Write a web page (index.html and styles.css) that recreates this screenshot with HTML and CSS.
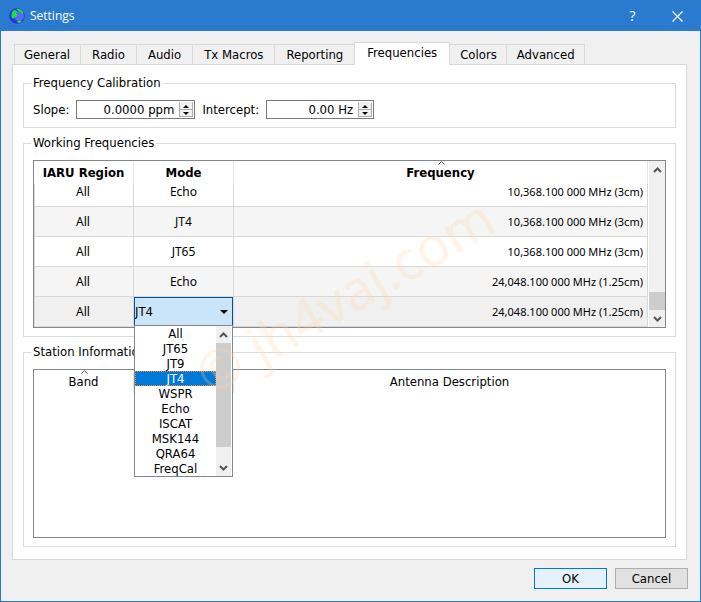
FILE: index.html
```html
<!DOCTYPE html>
<html lang="en">
<head>
    <meta charset="utf-8">
    <title>Settings</title>
    <link rel="stylesheet" href="styles.css">
</head>
<body>
<div class="window">
    <header class="titlebar">
        <svg class="globe" width="16" height="16" viewBox="0 0 16 16">
            <circle cx="8" cy="8" r="7.8" fill="#2336e6"/>
            <circle cx="10" cy="8" r="5" fill="#5c68f0"/>
            <path d="M3.5 3.5 5 2l2.500.5.5 2-1 1 1.500 1-1 2-2 1-1.500 1.500-1.500-2V6z" fill="#19e43c"/>
            <path d="M7 1l3-.3 3 1.800 1.500 2-1 1.500-1.500-1.500-1.500-1L9 2.500z" fill="#19e43c"/>
            <path d="M8 13l3-.6 2 .3-1.500 1.800-2.500.6z" fill="#19e43c"/>
        </svg>
        <h1>Settings</h1>
        <button class="win_btn" type="button" aria-label="Help">?</button>
        <button class="win_btn" type="button" aria-label="Close">
            <svg width="11" height="11" viewBox="0 0 11 11"><path d="M.5.5l10 10M10.500.5l-10 10" stroke="#fff" stroke-width="1.200" fill="none"/></svg>
        </button>
    </header>

    <main>
        <nav class="tabs" role="tablist">
            <button type="button" role="tab">General</button>
            <button type="button" role="tab">Radio</button>
            <button type="button" role="tab">Audio</button>
            <button type="button" role="tab">Tx Macros</button>
            <button type="button" role="tab">Reporting</button>
            <button type="button" role="tab" class="active" aria-selected="true">Frequencies</button>
            <button type="button" role="tab">Colors</button>
            <button type="button" role="tab">Advanced</button>
        </nav>

        <div class="pane">
            <fieldset>
                <legend>Frequency Calibration</legend>
                <div class="calibration">
                    <label for="slope">Slope:</label>
                    <div class="spin spin_slope">
                        <input type="text" id="slope" value="0.0000 ppm">
                        <div class="spin_btns">
                            <button type="button" aria-label="Increase slope"><svg width="6" height="3" viewBox="0 0 6 3"><path d="M0 3l3-3 3 3z"/></svg></button>
                            <button type="button" aria-label="Decrease slope"><svg width="6" height="3" viewBox="0 0 6 3"><path d="M0 0l3 3 3-3z"/></svg></button>
                        </div>
                    </div>
                    <label for="intercept">Intercept:</label>
                    <div class="spin spin_intercept">
                        <input type="text" id="intercept" value="0.00 Hz">
                        <div class="spin_btns">
                            <button type="button" aria-label="Increase intercept"><svg width="6" height="3" viewBox="0 0 6 3"><path d="M0 3l3-3 3 3z"/></svg></button>
                            <button type="button" aria-label="Decrease intercept"><svg width="6" height="3" viewBox="0 0 6 3"><path d="M0 0l3 3 3-3z"/></svg></button>
                        </div>
                    </div>
                </div>
            </fieldset>

            <fieldset>
                <legend>Working Frequencies</legend>
                <div class="view">
                    <table class="grid">
                        <thead>
                            <tr>
                                <th class="col_s">IARU Region</th>
                                <th class="col_s">Mode</th>
                                <th>Frequency<svg class="sort" width="7" height="4" viewBox="0 0 7 4"><path d="M.5 3.500l3-3 3 3" stroke="#555" fill="none"/></svg></th>
                            </tr>
                        </thead>
                        <tbody>
                            <tr class="clipped"><td>All</td><td>Echo</td><td>10,368.100 000 MHz (3cm)</td></tr>
                            <tr class="alt"><td>All</td><td>JT4</td><td>10,368.100 000 MHz (3cm)</td></tr>
                            <tr><td>All</td><td>JT65</td><td>10,368.100 000 MHz (3cm)</td></tr>
                            <tr class="alt"><td>All</td><td>Echo</td><td>24,048.100 000 MHz (1.25cm)</td></tr>
                            <tr class="current">
                                <td>All</td>
                                <td class="edit">
                                    <select class="mode" aria-label="Mode">
                                        <option>JT4</option>
                                    </select>
                                    <svg class="drop" width="8" height="4" viewBox="0 0 8 4"><path d="M0 0h8l-4 4z"/></svg>
                                    <div class="popup">
                                        <ul role="listbox" aria-label="Modes">
                                            <li>All</li>
                                            <li>JT65</li>
                                            <li>JT9</li>
                                            <li class="selected">JT4</li>
                                            <li>WSPR</li>
                                            <li>Echo</li>
                                            <li>ISCAT</li>
                                            <li>MSK144</li>
                                            <li>QRA64</li>
                                            <li>FreqCal</li>
                                        </ul>
                                        <div class="scroll scroll_top">
                                            <svg width="9" height="6" viewBox="0 0 9 6"><path d="M1 5l3.500-3.500L8 5" class="arrow"/></svg>
                                            <div class="thumb"></div>
                                            <svg width="9" height="6" viewBox="0 0 9 6"><path d="M1 1l3.500 3.500L8 1" class="arrow"/></svg>
                                        </div>
                                    </div>
                                </td>
                                <td>24,048.100 000 MHz (1.25cm)</td>
                            </tr>
                        </tbody>
                    </table>
                    <div class="scroll scroll_bottom">
                        <svg width="9" height="6" viewBox="0 0 9 6"><path d="M1 5l3.500-3.500L8 5" class="arrow"/></svg>
                        <div class="thumb"></div>
                        <svg width="9" height="6" viewBox="0 0 9 6"><path d="M1 1l3.500 3.500L8 1" class="arrow"/></svg>
                    </div>
                </div>
            </fieldset>

            <fieldset class="station">
                <legend>Station Information</legend>
                <div class="view">
                    <table class="grid plain">
                        <thead>
                            <tr>
                                <th class="col_s">Band<svg class="sort" width="7" height="4" viewBox="0 0 7 4"><path d="M.5 3.500l3-3 3 3" stroke="#555" fill="none"/></svg></th>
                                <th class="col_s"></th>
                                <th>Antenna Description</th>
                            </tr>
                        </thead>
                    </table>
                </div>
            </fieldset>
        </div>

        <footer>
            <button type="button" class="btn default">OK</button>
            <button type="button" class="btn">Cancel</button>
        </footer>
    </main>
    <div class="watermark">© jh4vaj.com</div>
</div>
</body>
</html>
```

FILE: styles.css
```css
*{box-sizing: border-box;margin: 0;padding: 0;}
body{font: 13px/16px "DejaVu Sans Condensed","Noto Sans",sans-serif;color: #000;}
button,input,select{font: inherit;color: inherit;border: 0;border-radius: 0;}
svg{display: block;}

.window{position: relative;display: flex;flex-direction: column;height: 100vh;border: 1px solid #2a7bcf;background: #f0f0f0;overflow: hidden;}
.titlebar{display: flex;align-items: center;height: 30px;padding-left: 8px;background: #2a7bcf;color: #fff;font: 12px/16px "Open Sans","Noto Sans",sans-serif;}
.titlebar h1{flex: 1;margin-left: 5px;font-size: 12px;font-weight: normal;}
.win_btn{display: flex;align-items: center;justify-content: center;width: 45px;height: 30px;background: none;font-size: 14px;}

main{flex: 1;display: flex;flex-direction: column;min-height: 0;padding: 11px 12px 12px 11px;}

.tabs{display: flex;align-items: flex-end;padding-left: 2px;}
.tabs button{height: 20px;padding: 0 11px;border: 1px solid #d9d9d9;border-width: 1px 1px 0 0;background: #f0f0f0;}
.tabs button:first-child{padding: 0 10px 0 9px;border-left-width: 1px;}
.tabs .active{position: relative;height: 23px;margin: 0 0 -1px -1px;padding: 0 12px 2px;border-left-width: 1px;background: #fff;}
.tabs .active ~ button{padding: 0 9px 0 10px;}

.pane{flex: 1;display: flex;flex-direction: column;gap: 7px;min-height: 0;margin-right: 1px;padding: 10px 10px 12px;border: 1px solid #d9d9d9;background: #fff;}
fieldset{min-width: 0;padding: 9px 9px 8px;border: 1px solid #dcdcdc;}
legend{margin-left: -2px;padding: 0 2px;}
.station{flex: 1;display: flex;flex-direction: column;}
.station .view{flex: 1;}

.calibration{display: flex;align-items: center;gap: 7px;height: 19px;}
.spin{display: flex;height: 19px;border: 1px solid #7a7a7a;background: #fff;}
.spin_slope{width: 119px;}
.spin_intercept{width: 108px;}
.spin input{flex: 1;min-width: 0;padding-right: 5px;background: none;text-align: right;}
.spin_btns{display: flex;flex-direction: column;width: 15px;padding: 1px 1px 1px 0;}
.spin_btns button{flex: 1;display: flex;align-items: center;justify-content: center;border: 1px solid #adadad;background: #f0f0f0;}
.spin_btns button:first-child{border-top-color: #f0f0f0;border-bottom: 0;}

.view{display: flex;align-items: flex-start;border: 1px solid #828790;background: #fff;}
.grid{flex: 1;border-collapse: separate;border-spacing: 0;table-layout: fixed;}
.grid th{position: relative;height: 23px;border-right: 1px solid #e5e5e5;text-align: center;}
.grid .col_s{width: 100px;}
.sort{position: absolute;top: 0;left: 50%;margin-left: -3px;}
.grid td{height: 30px;border-right: 1px solid #d8d8d8;border-bottom: 1px solid #d8d8d8;text-align: center;font: 12px/16px "Noto Sans",sans-serif;}
.grid td:first-child{padding-right: 2px;border-left: 1px solid #d8d8d8;}
.grid td:last-child{padding-right: 4px;text-align: right;font-size: 11px;}
.grid .clipped td{height: 23px;padding-bottom: 6px;}
.alt{background: #f5f5f5;}
.current{background: #f0f0f0;}
.plain th{font-weight: normal;}
.plain th:last-child{border-right: 0;}

.grid .edit{position: relative;}
.mode{display: block;width: 99px;height: 29px;border: 1px solid #005499;background: #cce4f7;appearance: none;font: 13px/16px "DejaVu Sans Condensed","Noto Sans",sans-serif;}
.drop{position: absolute;top: 13px;right: 5px;}
.popup{position: absolute;z-index: 2;top: 28px;left: 0;display: flex;width: 99px;padding-right: 1px;border: 1px solid #828790;background: #fff;font: 13px/15px "DejaVu Sans Condensed","Noto Sans",sans-serif;}
.popup ul{flex: 1;list-style: none;text-align: center;}
.popup .selected{outline: 1px dotted #ff8728;outline-offset: -1px;background: #0078d7;color: #fff;}

.scroll{align-self: stretch;display: flex;flex-direction: column;align-items: center;width: 16px;padding: 6px 0 5px;background: #f0f0f0;}
.popup .scroll{width: 15px;}
.view > .scroll{margin-left: 1px;}
.thumb{align-self: stretch;background: #cdcdcd;}
.scroll_bottom .thumb{height: 18px;margin: auto 0 6px;}
.scroll_top .thumb{height: 104px;margin: 5px 0 auto;}
.arrow{fill: none;stroke: #555;stroke-width: 2;}

footer{display: flex;justify-content: flex-end;gap: 8px;padding-top: 8px;}
.btn{width: 73px;height: 21px;border: 1px solid #adadad;background: #e1e1e1;}
.btn.default{border-color: #0078d7;background: #e5f1fb;}

.watermark{position: absolute;z-index: 3;top: 49%;left: 49%;transform: translate(-50%,-50%) rotate(-30deg);color: rgba(255,210,160,.25);font: 54px/60px "Noto Sans",sans-serif;white-space: nowrap;pointer-events: none;}
```
